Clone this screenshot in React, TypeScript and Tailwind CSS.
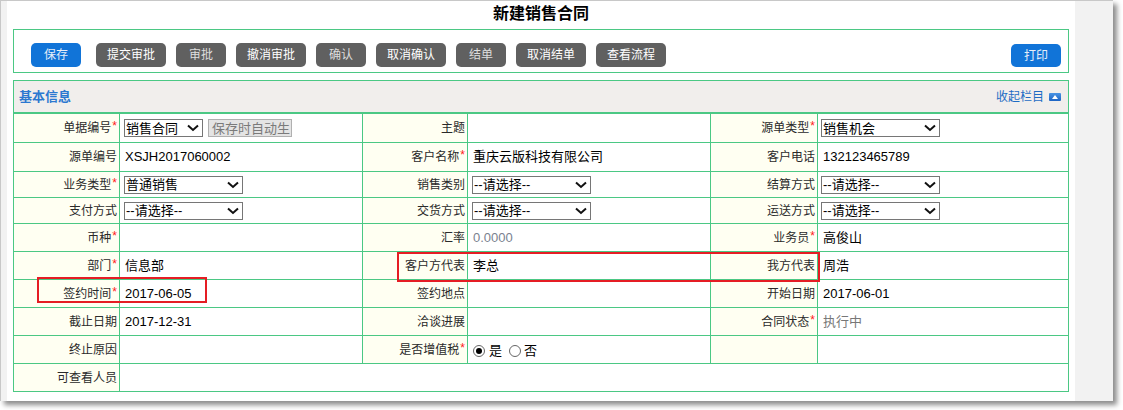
import React from 'react';

const FONT = '"Liberation Sans", "Noto Sans CJK SC", sans-serif';

type Btn = { text: string; wide?: boolean; dim?: boolean };

const buttons: Btn[] = [
  { text: '提交审批', wide: true },
  { text: '审批', dim: true },
  { text: '撤消审批', wide: true },
  { text: '确认', dim: true },
  { text: '取消确认', wide: true },
  { text: '结单', dim: true },
  { text: '取消结单', wide: true },
  { text: '查看流程', wide: true },
];

const Chevron = () => (
  <svg width="12" height="8" viewBox="0 0 12 8" className="shrink-0">
    <polyline points="1,1.5 6,6 11,1.5" fill="none" stroke="#111" strokeWidth="2" />
  </svg>
);

const FakeSelect = ({ value, width = 'w-[119px]' }: { value: string; width?: string }) => (
  <div
    className={`${width} h-[18px] border border-[#767676] bg-white flex items-center justify-between pl-[1px] pr-[3px] text-[13px] text-black leading-none`}
  >
    <span>{value}</span>
    <Chevron />
  </div>
);

const Label = ({ text, req }: { text: string; req?: boolean }) => (
  <div className="bg-[#fffff2] border-r border-b border-[#4bc884] flex items-center justify-end pr-[2px] text-[12px] text-[#2a2a2a]">
    <span>{text}</span>
    {req && <span className="text-[#ff2020] text-[12px] relative top-[-2px] ml-[1px]">*</span>}
  </div>
);

const Value = ({ children, last }: { children?: React.ReactNode; last?: boolean }) => (
  <div
    className={`bg-white border-b border-[#4bc884] ${last ? '' : 'border-r'} flex items-center pl-[5px] text-[13px] text-black`}
  >
    {children}
  </div>
);

const Radio = ({ checked }: { checked?: boolean }) => (
  <span className="w-[12px] h-[12px] rounded-full border border-[#666] bg-white flex items-center justify-center">
    {checked && <span className="w-[6px] h-[6px] rounded-full bg-black" />}
  </span>
);

const rowHeights = ['h-[29px]', 'h-[29px]', 'h-[26px]', 'h-[26px]', 'h-[28px]', 'h-[28px]', 'h-[28px]', 'h-[28px]', 'h-[28px]'];

export default function App() {
  const rows: React.ReactNode[][] = [
    [
      <Label key="a" text="单据编号" req />,
      <Value key="b">
        <div className="flex items-center gap-[5px] -ml-[1px]">
          <FakeSelect value="销售合同" width="w-[79px]" />
          <div className="w-[84px] h-[18px] border border-[#b0b0b0] bg-[#e4e4e4] text-[#7a7a7a] text-[13px] leading-none flex items-center pl-[3px] overflow-hidden whitespace-nowrap">
            保存时自动生
          </div>
        </div>
      </Value>,
      <Label key="c" text="主题" />,
      <Value key="d" />,
      <Label key="e" text="源单类型" req />,
      <Value key="f" last>
        <div className="-ml-[2px]"><FakeSelect value="销售机会" /></div>
      </Value>,
    ],
    [
      <Label key="a" text="源单编号" />,
      <Value key="b">XSJH2017060002</Value>,
      <Label key="c" text="客户名称" req />,
      <Value key="d">重庆云版科技有限公司</Value>,
      <Label key="e" text="客户电话" />,
      <Value key="f" last>132123465789</Value>,
    ],
    [
      <Label key="a" text="业务类型" req />,
      <Value key="b"><div className="-ml-[1px]"><FakeSelect value="普通销售" /></div></Value>,
      <Label key="c" text="销售类别" />,
      <Value key="d"><div className="-ml-[1px]"><FakeSelect value="--请选择--" /></div></Value>,
      <Label key="e" text="结算方式" />,
      <Value key="f" last><div className="-ml-[2px]"><FakeSelect value="--请选择--" /></div></Value>,
    ],
    [
      <Label key="a" text="支付方式" />,
      <Value key="b"><div className="-ml-[1px]"><FakeSelect value="--请选择--" /></div></Value>,
      <Label key="c" text="交货方式" />,
      <Value key="d"><div className="-ml-[1px]"><FakeSelect value="--请选择--" /></div></Value>,
      <Label key="e" text="运送方式" />,
      <Value key="f" last><div className="-ml-[2px]"><FakeSelect value="--请选择--" /></div></Value>,
    ],
    [
      <Label key="a" text="币种" req />,
      <Value key="b" />,
      <Label key="c" text="汇率" />,
      <Value key="d"><span className="text-[#7a8290]">0.0000</span></Value>,
      <Label key="e" text="业务员" req />,
      <Value key="f" last>高俊山</Value>,
    ],
    [
      <Label key="a" text="部门" req />,
      <Value key="b">信息部</Value>,
      <Label key="c" text="客户方代表" />,
      <Value key="d">李总</Value>,
      <Label key="e" text="我方代表" />,
      <Value key="f" last>周浩</Value>,
    ],
    [
      <Label key="a" text="签约时间" req />,
      <Value key="b">2017-06-05</Value>,
      <Label key="c" text="签约地点" />,
      <Value key="d" />,
      <Label key="e" text="开始日期" />,
      <Value key="f" last>2017-06-01</Value>,
    ],
    [
      <Label key="a" text="截止日期" />,
      <Value key="b">2017-12-31</Value>,
      <Label key="c" text="洽谈进展" />,
      <Value key="d" />,
      <Label key="e" text="合同状态" req />,
      <Value key="f" last><span className="text-[#777]">执行中</span></Value>,
    ],
    [
      <Label key="a" text="终止原因" />,
      <Value key="b" />,
      <Label key="c" text="是否增值税" req />,
      <Value key="d">
        <div className="flex items-center pt-[2px]">
          <Radio checked />
          <span className="ml-[4px] mr-[7px]">是</span>
          <Radio />
          <span className="ml-[3px]">否</span>
        </div>
      </Value>,
      <Label key="e" text="" />,
      <Value key="f" last />,
    ],
  ];

  return (
    <div className="relative w-[1123px] h-[410px] bg-white overflow-hidden" style={{ fontFamily: FONT }}>
      {/* window */}
      <div className="w-[1113px] h-[401px] border-l border-t border-[#c8c8c8] flex shadow-[4px_4px_5px_rgba(0,0,0,0.45)] bg-[#f2f2f2]">
        <div className="w-[6px] bg-[#f2f2f2]" />
        <div className="w-[1068px] bg-white flex flex-col">
          <div className="h-[28px] flex items-center justify-center pb-[3px] text-[16px] font-bold text-black">
            新建销售合同
          </div>

          {/* Toolbar */}
          <div className="mx-[6px] h-[44px] border border-[#4bc884] flex items-end justify-between pb-[5px] pl-[17px] pr-[7px]">
            <div className="flex items-center">
              <button className="w-[50px] h-[24px] rounded-[5px] bg-[#1174d8] text-[#e6eef8] text-[12px] flex items-center justify-center mr-[15px]">
                保存
              </button>
              <div className="flex items-center gap-[10px]">
                {buttons.map((b) => (
                  <button
                    key={b.text}
                    className={`${b.wide ? 'w-[70px]' : 'w-[50px]'} h-[24px] rounded-[5px] bg-[#606060] text-[12px] flex items-center justify-center ${
                      b.dim ? 'text-[#dedede]' : 'text-white'
                    }`}
                  >
                    {b.text}
                  </button>
                ))}
              </div>
            </div>
            <button className="w-[50px] h-[23px] rounded-[5px] bg-[#1174d8] text-[#e6eef8] text-[12px] flex items-center justify-center">
              打印
            </button>
          </div>

          {/* Section */}
          <div className="mx-[6px] mt-[7px] border border-[#4bc884] flex flex-col">
            <div className="h-[33px] bg-[#f1eeec] border-b-2 border-[#4bc884] flex items-center justify-between pl-[5px] pr-[7px]">
              <span className="text-[13px] font-bold text-[#2b78d0]">基本信息</span>
              <div className="flex items-center gap-[5px]">
                <span className="text-[12px] text-[#1e6cc4]">收起栏目</span>
                <span className="w-[12px] h-[8px] rounded-[1px] bg-gradient-to-b from-[#4a94e4] to-[#1d64c4] flex items-center justify-center">
                  <svg width="6" height="4" viewBox="0 0 6 4">
                    <polygon points="0,4 3,0 6,4" fill="#fff" />
                  </svg>
                </span>
              </div>
            </div>

            <div className="grid grid-cols-[106px_243px_105px_243px_107px_1fr]">
              {rows.map((cells, i) => (
                <div key={i} className="contents">
                  {cells.map((c, j) => (
                    <div key={j} className={`${rowHeights[i]} grid`}>
                      {c}
                    </div>
                  ))}
                </div>
              ))}
              <div className="h-[27px] grid">
                <div className="bg-[#fffff2] border-r border-[#4bc884] flex items-center justify-end pr-[2px] text-[12px] text-[#2a2a2a]">
                  可查看人员
                </div>
              </div>
              <div className="col-span-5 h-[27px] bg-white" />
            </div>
          </div>
        </div>
        <div className="flex-1 bg-[#f2f2f2]" />
      </div>

      {/* annotation boxes */}
      <div className="absolute left-[37px] top-[277px] w-[170px] h-[26px] border-2 border-[#e51d24]" />
      <div className="absolute left-[397px] top-[252px] w-[423px] h-[30px] border-2 border-[#e51d24]" />
    </div>
  );
}
